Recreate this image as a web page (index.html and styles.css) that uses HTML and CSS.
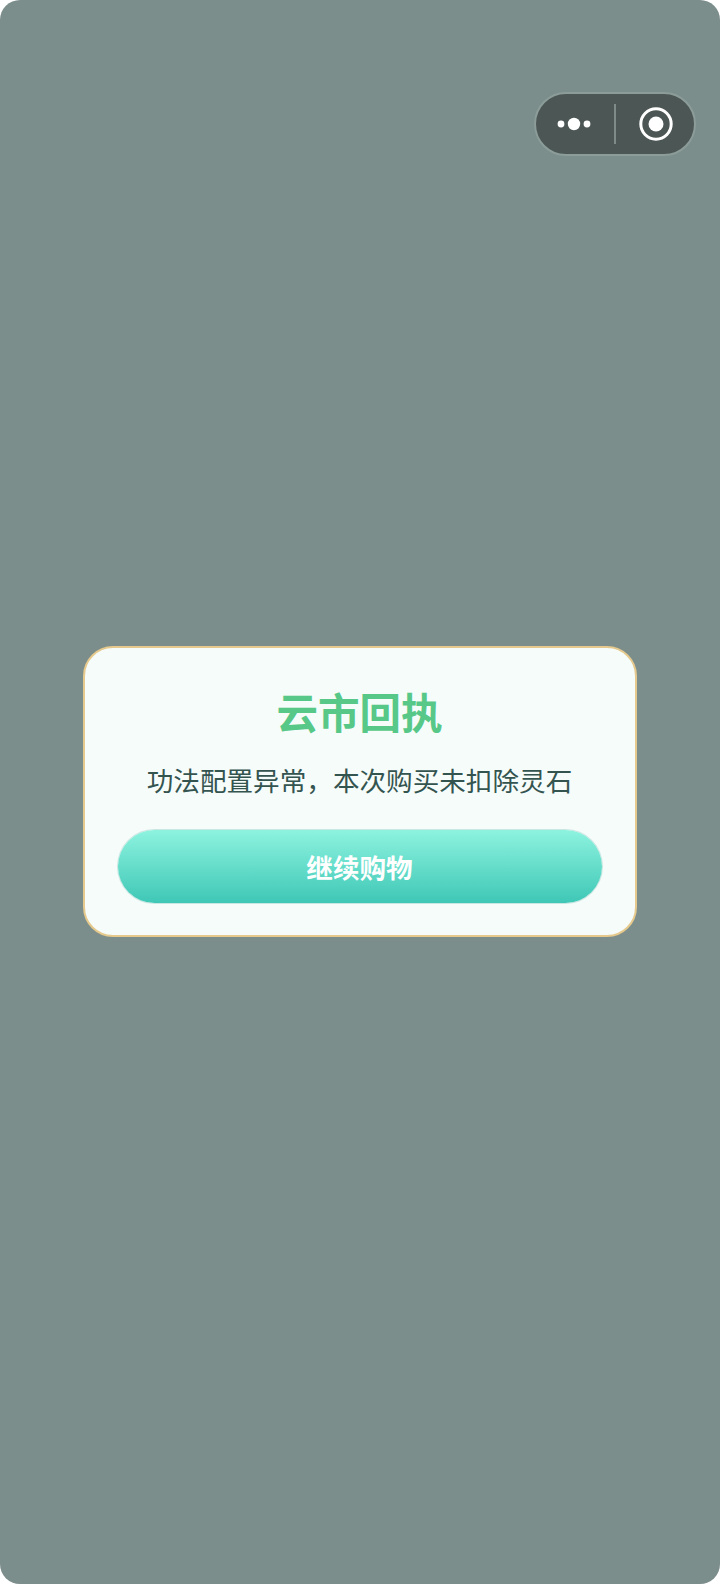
FILE: index.html
```html
<!DOCTYPE html>
<html lang="zh-CN">
<head>
<meta charset="utf-8">
<title>云市回执</title>
<link rel="stylesheet" href="styles.css">
</head>
<body>
<main class="screen">
  <div class="capsule">
    <div class="capsule-part capsule-more">
      <svg class="icon-more" viewBox="0 0 36 14" width="36" height="14"><circle cx="5" cy="7" r="3.4"/><circle cx="18" cy="7" r="6.2"/><circle cx="31" cy="7" r="3.4"/></svg>
    </div>
    <div class="capsule-line"></div>
    <div class="capsule-part capsule-close">
      <svg class="icon-target" viewBox="0 0 36 36" width="36" height="36"><circle class="ring" cx="18" cy="18" r="15.2"/><circle cx="18" cy="18" r="7.5"/></svg>
    </div>
  </div>
  <section class="card">
    <h1 class="title">云市回执</h1>
    <p class="message">功法配置异常，本次购买未扣除灵石</p>
    <button class="action">继续购物</button>
  </section>
</main>
</body>
</html>
```
FILE: styles.css
```css
html, body {
  margin: 0;
  padding: 0;
  background: #fff;
}
.screen {
  position: relative;
  width: 720px;
  height: 1584px;
  background: #7c8e8b;
  border-radius: 20px;
  overflow: hidden;
  display: flex;
  align-items: center;
  justify-content: center;
  font-family: "Noto Sans CJK SC", "Noto Sans", sans-serif;
}
.capsule {
  position: absolute;
  top: 92px;
  left: 534px;
  width: 162px;
  height: 64px;
  box-sizing: border-box;
  display: flex;
  align-items: center;
  background: #4c5755;
  border: 2px solid #8b9c99;
  border-radius: 32px;
}
.capsule-part {
  flex: 1 1 0;
  box-sizing: border-box;
  display: flex;
  align-items: center;
  justify-content: center;
}
.capsule-more {
  padding-right: 2px;
}
.capsule-close {
  padding-left: 2px;
}
.capsule-line {
  width: 1.5px;
  height: 40px;
  background: #7e8b89;
}
.icon-more circle, .icon-target circle {
  fill: #fff;
}
.icon-target .ring {
  fill: none;
  stroke: #fff;
  stroke-width: 3;
}
.card {
  width: 554px;
  height: 291px;
  margin: 0 1px 1px 0;
  box-sizing: border-box;
  background: #f6fcfa;
  border: 2px solid #e6c98c;
  border-radius: 30px;
  padding: 0 33px;
  display: flex;
  flex-direction: column;
  align-items: center;
}
.title {
  margin: 34px 0 0;
  font-size: 41.5px;
  line-height: 58px;
  font-weight: 700;
  color: #58c888;
}
.message {
  margin: 21px 0 0;
  font-size: 26.6px;
  line-height: 38px;
  font-weight: 400;
  color: #345450;
  white-space: nowrap;
}
.action {
  margin-top: 31px;
  width: 100%;
  height: 73px;
  border: none;
  border-radius: 37px;
  background: linear-gradient(180deg, #8df3df 0%, #3fc7b6 100%);
  box-shadow: 0 0 0 1px rgba(120, 190, 180, .35);
  color: #fff;
  font-family: inherit;
  font-size: 26.6px;
  font-weight: 700;
  padding: 0;
}
```
